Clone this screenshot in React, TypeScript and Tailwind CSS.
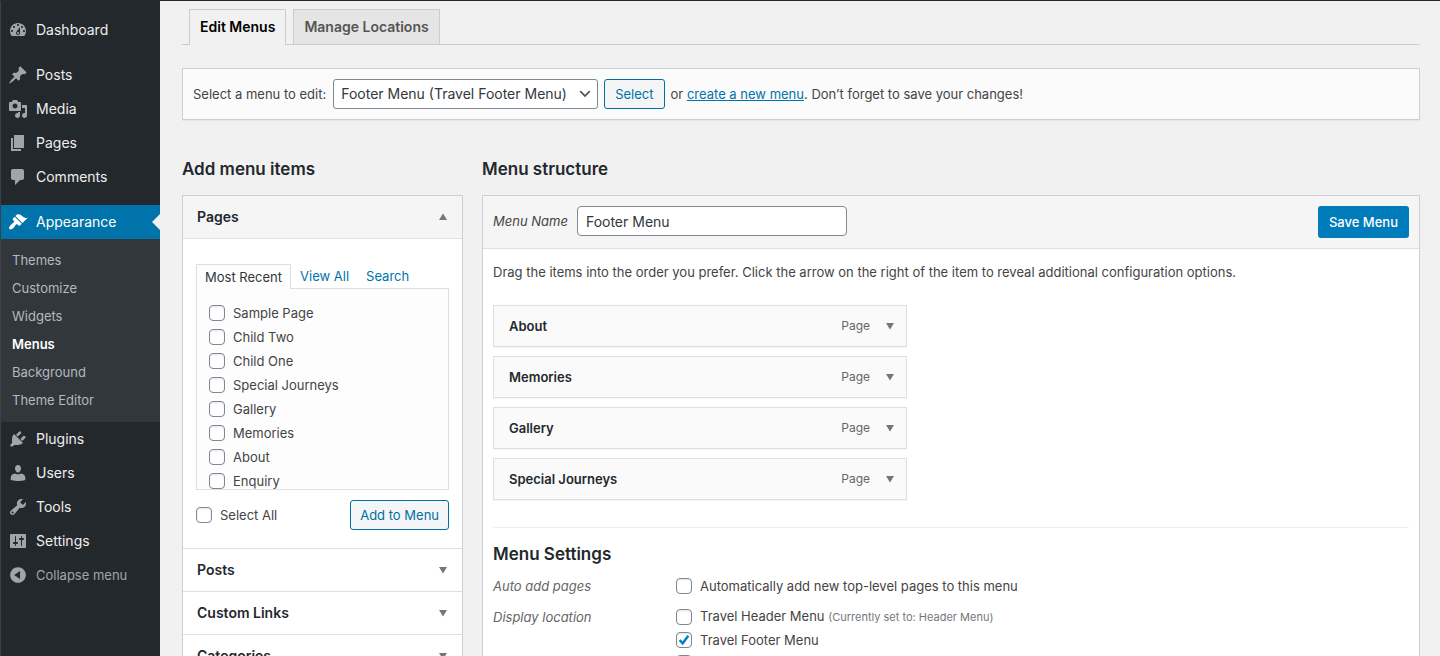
import { useState } from "react";
import type { ReactNode } from "react";

const icons = {
  dashboard:
    "M3.76 16h12.48c1.1-1.37 1.76-3.11 1.76-5 0-4.42-3.58-8-8-8s-8 3.58-8 8c0 1.89.66 3.63 1.76 5zM10 4c.55 0 1 .45 1 1s-.45 1-1 1-1-.45-1-1 .45-1 1-1zM6 6c.55 0 1 .45 1 1s-.45 1-1 1-1-.45-1-1 .45-1 1-1zm8 0c.55 0 1 .45 1 1s-.45 1-1 1-1-.45-1-1 .45-1 1-1zm-5.37 5.55L12 7v6c0 1.1-.9 2-2 2s-2-.9-2-2c0-.57.24-1.08.63-1.45zM4 10c.55 0 1 .45 1 1s-.45 1-1 1-1-.45-1-1 .45-1 1-1zm12 0c.55 0 1 .45 1 1s-.45 1-1 1-1-.45-1-1 .45-1 1-1zm-5 3c0-.55-.45-1-1-1s-1 .45-1 1 .45 1 1 1 1-.45 1-1z",
  post: "M10.44 3.02l1.82-1.82 6.36 6.35-1.83 1.82c-1.05-.68-2.48-.57-3.41.36l-.75.75c-.92.93-1.04 2.35-.35 3.41l-1.83 1.82-2.41-2.41-2.8 2.79c-.42.42-3.38 2.71-3.8 2.29s1.86-3.39 2.28-3.81l2.79-2.79L4.1 9.36l1.83-1.82c1.05.69 2.48.57 3.4-.36l.75-.75c.93-.92 1.05-2.35.36-3.41z",
  media:
    "M13 11V4c0-.55-.45-1-1-1h-1.67L9 1H5L3.67 3H2c-.55 0-1 .45-1 1v7c0 .55.45 1 1 1h10c.55 0 1-.45 1-1zM7 4.5c1.38 0 2.5 1.12 2.5 2.5S8.38 9.5 7 9.5 4.5 8.38 4.5 7 5.62 4.5 7 4.5zM14 6h5v10.5c0 1.38-1.12 2.5-2.5 2.5S14 17.88 14 16.5s1.12-2.5 2.5-2.5c.17 0 .34.02.5.05V9h-3V6zm-4 8.05V13h2v3.5c0 1.38-1.12 2.5-2.5 2.5S7 17.88 7 16.5 8.12 14 9.5 14c.17 0 .34.02.5.05z",
  page: "M6 15V2h10v13H6zm-1 1h8v2H3V5h2v11z",
  comments:
    "M5 2h9c1.1 0 2 .9 2 2v7c0 1.1-.9 2-2 2h-2l-5 5v-5H5c-1.1 0-2-.9-2-2V4c0-1.1.9-2 2-2z",
  appearance:
    "M14.48 11.06L7.41 3.99l1.5-1.5c.5-.56 2.3-.47 3.51.32 1.21.8 1.43 1.28 2.91 2.1 1.18.64 2.45 1.26 4.45.85zm-.71.71L6.7 4.7 4.93 6.47c-.39.39-.39 1.02 0 1.41l1.06 1.06c.39.39.39 1.03 0 1.42-.6.6-1.43 1.11-2.21 1.69-.35.26-.7.53-1.01.84C1.43 14.23.4 16.08 1.4 17.07c.99 1 2.84-.03 4.18-1.36.31-.31.58-.66.85-1.02.57-.78 1.08-1.61 1.69-2.21.39-.39 1.02-.39 1.41 0l1.06 1.06c.39.39 1.02.39 1.41 0z",
  plugins:
    "M13.11 4.36L9.87 7.6 8 5.73l3.24-3.24c.35-.34 1.05-.2 1.56.32.52.51.66 1.21.31 1.55zm-8 1.77l.91-1.12 9.01 9.01-1.19.84c-.71.71-2.63 1.16-3.82 1.16H6.14L4.9 17.26c-.59.59-1.54.59-2.12 0-.59-.58-.59-1.53 0-2.12l1.24-1.24v-3.88c0-1.13.4-3.19 1.09-3.89zm7.26 3.97l3.24-3.24c.34-.35 1.04-.21 1.55.31.52.51.66 1.21.31 1.55l-3.24 3.25z",
  users:
    "M10 2c1.8 0 3 1.4 3 3.3S11.8 9.6 10 9.6 7 7.2 7 5.3 8.2 2 10 2zM7 10.4c1 .6 2 .9 3 .9s2-.3 3-.9c2.4.2 4.3 1.9 4.3 4.1V17s-3 1-7.3 1-7.3-1-7.3-1v-2.5c0-2.2 1.9-3.9 4.3-4.1z",
  tools:
    "M16.68 9.77c-1.34 1.34-3.3 1.67-4.95.99l-5.41 6.52c-.99.99-2.59.99-3.58 0s-.99-2.59 0-3.57l6.52-5.42c-.68-1.65-.35-3.61.99-4.95 1.28-1.28 3.12-1.62 4.72-1.06l-2.89 2.89 2.82 2.82 2.86-2.87c.53 1.58.18 3.39-1.08 4.65zM3.81 16.21c.4.39 1.04.39 1.43 0 .4-.4.4-1.04 0-1.43-.39-.4-1.03-.4-1.43 0-.39.39-.39 1.03 0 1.43z",
  settings:
    "M18 16V4c0-.55-.45-1-1-1H3c-.55 0-1 .45-1 1v12c0 .55.45 1 1 1h14c.55 0 1-.45 1-1zM8 11h1c.55 0 1 .45 1 1s-.45 1-1 1H8v1.5c0 .28-.22.5-.5.5s-.5-.22-.5-.5V13H6c-.55 0-1-.45-1-1s.45-1 1-1h1V5.5c0-.28.22-.5.5-.5s.5.22.5.5V11zm5-2h-1c-.55 0-1-.45-1-1s.45-1 1-1h1V5.5c0-.28.22-.5.5-.5s.5.22.5.5V7h1c.55 0 1 .45 1 1s-.45 1-1 1h-1v5.5c0 .28-.22.5-.5.5s-.5-.22-.5-.5V9z",
  collapse:
    "M10 2.16c4.33 0 7.84 3.51 7.84 7.84s-3.51 7.84-7.84 7.84S2.16 14.33 2.16 10 5.67 2.16 10 2.16zm2 11.72V6.12L6.18 9.97z",
  down: "M14 7l-4 6.5L6 7h8z",
  up: "M6 13l4-6.5L14 13H6z",
};

type IconName = keyof typeof icons;

function Icon({ name, className }: { name: IconName; className: string }) {
  return (
    <svg viewBox="0 0 20 20" fill="currentColor" fillRule="evenodd" aria-hidden="true" className={className}>
      <path d={icons[name]} />
    </svg>
  );
}

function NavItem({ icon, label, active = false }: { icon: IconName; label: string; active?: boolean }) {
  return (
    <li className="relative">
      <a
        href="#"
        className={
          active
            ? "flex h-[34px] items-center gap-2 bg-[#0073aa] pl-[7px] text-white"
            : "flex h-[34px] items-center gap-2 pl-[7px] text-[#eee]"
        }
      >
        <Icon name={icon} className={active ? "size-5 text-white" : "size-5 text-[#a0a5aa]"} />
        {label}
      </a>
      {active && (
        <span className="absolute top-[9px] right-0 border-8 border-l-0 border-transparent border-r-[#f1f1f1]" />
      )}
    </li>
  );
}

const subItems = ["Themes", "Customize", "Widgets", "Menus", "Background", "Theme Editor"];

function Sidebar() {
  return (
    <nav aria-label="Main menu" className="w-40 shrink-0 border-l border-[#3c4146] bg-[#23282d] pt-3 text-sm">
      <ul>
        <NavItem icon="dashboard" label="Dashboard" />
      </ul>
      <ul className="mt-[11px]">
        <NavItem icon="post" label="Posts" />
        <NavItem icon="media" label="Media" />
        <NavItem icon="page" label="Pages" />
        <NavItem icon="comments" label="Comments" />
      </ul>
      <ul className="mt-[11px]">
        <NavItem icon="appearance" label="Appearance" active />
        <li>
          <ul className="bg-[#32373c] pt-[7px] pb-2 text-[13px]">
            {subItems.map((item) => (
              <li key={item}>
                <a
                  href="#"
                  className={
                    item === "Menus"
                      ? "flex h-7 items-center px-[11px] font-semibold text-white"
                      : "flex h-7 items-center px-[11px] text-[#b4b9be]"
                  }
                >
                  {item}
                </a>
              </li>
            ))}
          </ul>
        </li>
        <NavItem icon="plugins" label="Plugins" />
        <NavItem icon="users" label="Users" />
        <NavItem icon="tools" label="Tools" />
        <NavItem icon="settings" label="Settings" />
      </ul>
      <button type="button" className="flex h-[34px] w-full items-center gap-2 pl-[7px] text-[13px] text-[#a0a5aa]">
        <Icon name="collapse" className="size-5" />
        Collapse menu
      </button>
    </nav>
  );
}

function Check({ children, checked = false, dense = false }: { children: ReactNode; checked?: boolean; dense?: boolean }) {
  return (
    <label className={dense ? "flex h-[23px] items-center gap-2" : "flex h-6 items-center gap-2"}>
      <span className="grid size-4 shrink-0 *:col-start-1 *:row-start-1">
        <input
          type="checkbox"
          defaultChecked={checked}
          className="peer size-4 appearance-none rounded border border-[#7e8993] bg-white shadow-[inset_0_1px_2px_rgba(0,0,0,0.1)]"
        />
        <svg
          viewBox="0 0 16 16"
          fill="none"
          stroke="#0085ba"
          strokeWidth="2.4"
          aria-hidden="true"
          className="pointer-events-none hidden size-4 peer-checked:block"
        >
          <path d="M3.6 8.2l3.1 3.1 5.6-7.6" />
        </svg>
      </span>
      <span>{children}</span>
    </label>
  );
}

function SectionHeader({ title, open = false }: { title: string; open?: boolean }) {
  return (
    <h3
      className={
        open
          ? "border-b border-[#dfdfdf] bg-[#f5f5f5] text-sm font-semibold text-[#23282d]"
          : "border-t border-[#dfdfdf] text-sm font-semibold text-[#23282d]"
      }
    >
      <button type="button" aria-expanded={open} className="flex h-[42px] w-full items-center justify-between pr-[9px] pl-3.5">
        {title}
        <Icon name={open ? "up" : "down"} className="size-5 text-[#72777c]" />
      </button>
    </h3>
  );
}

const pages = ["Sample Page", "Child Two", "Child One", "Special Journeys", "Gallery", "Memories", "About", "Enquiry"];

function AddItems() {
  return (
    <section className="w-[281px] shrink-0">
      <h2 className="text-[17px] leading-6 font-semibold text-[#23282d]">Add menu items</h2>
      <div className="mt-3.5 border border-[#ccd0d4] bg-white">
        <SectionHeader title="Pages" open />
        <div className="px-[13px] pt-[25px] pb-[18px]">
          <div className="flex h-6">
            <a
              href="#"
              className="-mb-px flex items-center border border-b-0 border-[#dfdfdf] bg-[#fdfdfd] px-2 text-[#32373c]"
            >
              Most Recent
            </a>
            <a href="#" className="flex items-center px-[9px] text-[#0073aa]">
              View All
            </a>
            <a href="#" className="flex items-center px-2 text-[#0073aa]">
              Search
            </a>
          </div>
          <div className="h-[202px] overflow-hidden border border-[#dfdfdf] bg-[#fdfdfd] px-3 pt-3">
            {pages.map((page) => (
              <Check key={page}>{page}</Check>
            ))}
          </div>
          <div className="mt-2.5 flex items-center justify-between">
            <Check>Select All</Check>
            <button
              type="button"
              className="h-[30px] rounded-[3px] border border-[#0071a1] bg-[#f3f5f6] px-[9px] text-[#0071a1]"
            >
              Add to Menu
            </button>
          </div>
        </div>
        <SectionHeader title="Posts" />
        <SectionHeader title="Custom Links" />
        <SectionHeader title="Categories" />
      </div>
    </section>
  );
}

const menuItems = ["About", "Memories", "Gallery", "Special Journeys"];

function Structure() {
  const [name, setName] = useState("Footer Menu");
  return (
    <section className="min-w-0 flex-1">
      <h2 className="text-[17px] leading-6 font-semibold text-[#23282d]">Menu structure</h2>
      <div className="mt-3.5 border border-[#ccd0d4] bg-white">
        <div className="flex items-start border-b border-[#dfdfdf] bg-[#f5f5f5] p-2.5">
          <label htmlFor="menu-name" className="flex h-[30px] items-center italic">
            Menu Name
          </label>
          <input
            id="menu-name"
            value={name}
            onChange={(e) => setName(e.target.value)}
            className="ml-[9px] h-[30px] w-[270px] rounded border border-[#7e8993] bg-white px-2 text-sm text-[#32373c]"
          />
          <button type="button" className="ml-auto h-8 rounded-[3px] bg-[#007cba] px-[11px] font-medium text-white">
            Save Menu
          </button>
        </div>
        <div className="px-2.5 pt-[13px] pb-6">
          <p>
            Drag the items into the order you prefer. Click the arrow on the right of the item to reveal additional
            configuration options.
          </p>
          <ul className="mt-[23px] flex max-w-[414px] flex-col gap-[9px]">
            {menuItems.map((item) => (
              <li
                key={item}
                className="flex h-[42px] items-center border border-[#dfdfdf] bg-[#fafafa] pr-[6px] pl-[15px] shadow-[0_1px_1px_rgba(0,0,0,0.04)]"
              >
                <span className="font-semibold text-[#23282d]">{item}</span>
                <span className="ml-auto text-xs text-[#666]">Page</span>
                <button type="button" aria-label={`Edit ${item}`} className="ml-2.5 text-[#72777c]">
                  <Icon name="down" className="size-5" />
                </button>
              </li>
            ))}
          </ul>
          <div className="mt-[27px] border-t border-[#eee] pt-3.5">
            <h3 className="text-[17px] leading-6 font-semibold text-[#23282d]">Menu Settings</h3>
            <fieldset className="mt-2 flex">
              <legend className="float-left w-[183px] leading-6 text-[#666] italic">Auto add pages</legend>
              <Check>Automatically add new top-level pages to this menu</Check>
            </fieldset>
            <fieldset className="mt-[7px] flex">
              <legend className="float-left w-[183px] leading-6 text-[#666] italic">Display location</legend>
              <div>
                <Check dense>
                  Travel Header Menu <span className="text-[11px] text-[#72777c]">(Currently set to: Header Menu)</span>
                </Check>
                <Check dense checked>
                  Travel Footer Menu
                </Check>
                <Check dense>Social Links Menu</Check>
              </div>
            </fieldset>
          </div>
        </div>
      </div>
    </section>
  );
}

export default function App() {
  return (
    <div className="flex h-screen overflow-hidden border-t border-[#23282d] bg-[#f1f1f1] font-['Inter',sans-serif] text-[13px] leading-5 text-[#444]">
      <Sidebar />
      <main className="min-w-0 flex-1 overflow-y-auto pt-2 pr-5 pl-[22px] [scrollbar-width:none]">
        <nav aria-label="Menu screens" className="flex gap-[7px] border-b border-[#ccc] pl-[7px] text-sm leading-6 font-semibold">
          <a href="#" className="-mb-px border border-b-0 border-[#ccc] bg-[#f1f1f1] px-2.5 pt-[5px] pb-1.5 text-black">
            Edit Menus
          </a>
          <a href="#" className="border border-b-0 border-[#ccc] bg-[#e5e5e5] px-2.5 py-[5px] text-[#555]">
            Manage Locations
          </a>
        </nav>
        <form
          onSubmit={(e) => e.preventDefault()}
          className="mt-[23px] flex items-center border border-[#ccd0d4] bg-[#fbfbfb] p-2.5 shadow-[0_1px_1px_rgba(0,0,0,0.04)]"
        >
          <label htmlFor="menu-select">Select a menu to edit:</label>
          <span className="ml-[7px] grid items-center *:col-start-1 *:row-start-1">
            <select
              id="menu-select"
              className="h-[30px] w-[265px] appearance-none rounded-[3px] border border-[#7e8993] bg-white pr-6 pl-[7px] text-sm text-[#32373c]"
            >
              <option>Footer Menu (Travel Footer Menu)</option>
              <option>Header Menu (Travel Header Menu)</option>
            </select>
            <svg
              viewBox="0 0 20 20"
              fill="#555"
              aria-hidden="true"
              className="pointer-events-none mr-[5px] size-4 justify-self-end"
            >
              <path d="M5 6l5 5 5-5 2 1-7 7-7-7 2-1z" />
            </svg>
          </span>
          <button
            type="submit"
            className="mr-1.5 ml-1.5 h-[30px] rounded-[3px] border border-[#0071a1] bg-[#f3f5f6] px-2.5 text-[#0071a1]"
          >
            Select
          </button>
          <p>
            or{" "}
            <a href="#" className="text-[#0073aa] underline">
              create a new menu
            </a>
            . Don’t forget to save your changes!
          </p>
        </form>
        <div className="mt-[37px] flex gap-[19px]">
          <AddItems />
          <Structure />
        </div>
      </main>
    </div>
  );
}
